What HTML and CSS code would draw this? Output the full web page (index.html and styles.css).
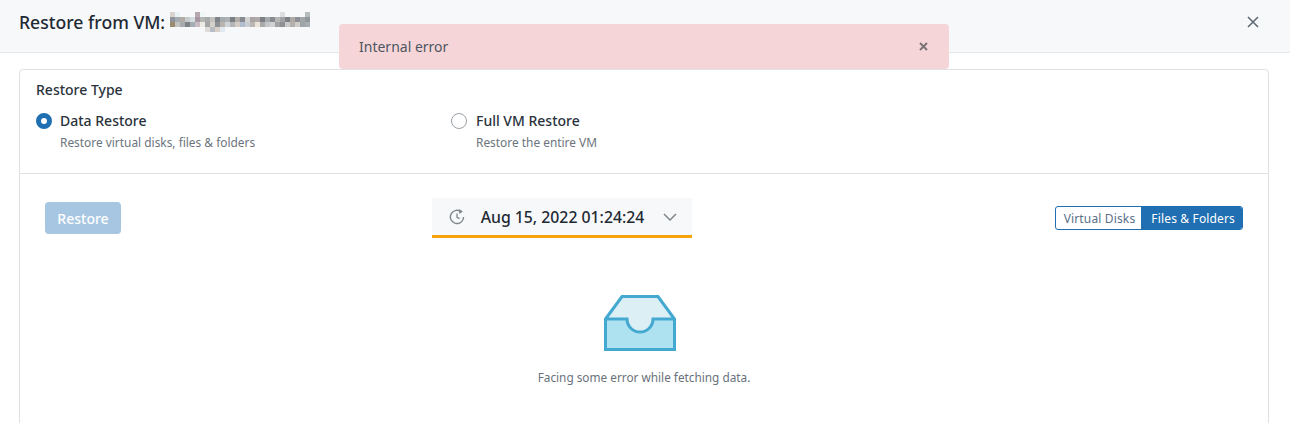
FILE: index.html
```html
<!DOCTYPE html>
<html lang="en">

<head>
    <meta charset="UTF-8">
    <meta name="viewport" content="width=device-width, initial-scale=1.0">
    <title>Restore from VM</title>
    <link rel="stylesheet" href="styles.css">
</head>

<body>
    <header class="modal-header">
        <div class="modal-title">
            <h1>Restore from VM:</h1>
            <svg class="blurred-name" width="140" height="20" viewBox="0 0 140 20">
                <!-- top row -->
                <rect x="0" y="0" width="5" height="5" fill="#d8d4cf"/>
                <rect x="5" y="0" width="5" height="5" fill="#eaf2f5"/>
                <rect x="25" y="0" width="5" height="5" fill="#b7a8b0"/>
                <rect x="30" y="0" width="5" height="5" fill="#eef6f6"/>
                <rect x="110" y="0" width="5" height="5" fill="#dedede"/>
                <rect x="135" y="0" width="5" height="5" fill="#b4bcbc"/>
                <!-- second row -->
                <rect x="0" y="5" width="5" height="5" fill="#8f9498"/>
                <rect x="5" y="5" width="5" height="5" fill="#a4acb2"/>
                <rect x="10" y="5" width="5" height="5" fill="#b3aca6"/>
                <rect x="15" y="5" width="5" height="5" fill="#c6cbcd"/>
                <rect x="20" y="5" width="5" height="5" fill="#d5dde0"/>
                <rect x="25" y="5" width="5" height="5" fill="#a897a2"/>
                <rect x="30" y="5" width="5" height="5" fill="#b4b6b4"/>
                <rect x="35" y="5" width="5" height="5" fill="#a9abab"/>
                <rect x="40" y="5" width="5" height="5" fill="#c2c2c0"/>
                <rect x="45" y="5" width="5" height="5" fill="#7f8388"/>
                <rect x="50" y="5" width="5" height="5" fill="#a6abae"/>
                <rect x="55" y="5" width="5" height="5" fill="#aeb2b4"/>
                <rect x="60" y="5" width="5" height="5" fill="#7c7f84"/>
                <rect x="65" y="5" width="5" height="5" fill="#b2aeaa"/>
                <rect x="70" y="5" width="5" height="5" fill="#868b92"/>
                <rect x="75" y="5" width="5" height="5" fill="#d2d3d2"/>
                <rect x="80" y="5" width="5" height="5" fill="#aaa5a4"/>
                <rect x="85" y="5" width="5" height="5" fill="#b0aaa8"/>
                <rect x="90" y="5" width="5" height="5" fill="#7d8186"/>
                <rect x="95" y="5" width="5" height="5" fill="#a8a9aa"/>
                <rect x="100" y="5" width="5" height="5" fill="#888c92"/>
                <rect x="105" y="5" width="5" height="5" fill="#b5b6b6"/>
                <rect x="110" y="5" width="5" height="5" fill="#a0a2a4"/>
                <rect x="115" y="5" width="5" height="5" fill="#7e8184"/>
                <rect x="120" y="5" width="5" height="5" fill="#aeaaa8"/>
                <rect x="125" y="5" width="5" height="5" fill="#8c9094"/>
                <rect x="130" y="5" width="5" height="5" fill="#a2a6a8"/>
                <rect x="135" y="5" width="5" height="5" fill="#90989c"/>
                <!-- third row -->
                <rect x="0" y="10" width="5" height="5" fill="#9b8a6e"/>
                <rect x="5" y="10" width="5" height="5" fill="#c2c4c2"/>
                <rect x="10" y="10" width="5" height="5" fill="#a8abae"/>
                <rect x="15" y="10" width="5" height="5" fill="#7e8286"/>
                <rect x="20" y="10" width="5" height="5" fill="#a4adb4"/>
                <rect x="25" y="10" width="5" height="5" fill="#c6bcc2"/>
                <rect x="30" y="10" width="5" height="5" fill="#ecebe4"/>
                <rect x="35" y="10" width="5" height="5" fill="#a4a6a8"/>
                <rect x="40" y="10" width="5" height="5" fill="#d6d0ca"/>
                <rect x="45" y="10" width="5" height="5" fill="#8d9196"/>
                <rect x="50" y="10" width="5" height="5" fill="#b8b4ae"/>
                <rect x="55" y="10" width="5" height="5" fill="#cfd4d8"/>
                <rect x="60" y="10" width="5" height="5" fill="#b4b5b6"/>
                <rect x="65" y="10" width="5" height="5" fill="#d4ccc4"/>
                <rect x="70" y="10" width="5" height="5" fill="#b2bece"/>
                <rect x="75" y="10" width="5" height="5" fill="#c8ced2"/>
                <rect x="80" y="10" width="5" height="5" fill="#bcb6b2"/>
                <rect x="85" y="10" width="5" height="5" fill="#ebe4d8"/>
                <rect x="90" y="10" width="5" height="5" fill="#a8aaac"/>
                <rect x="95" y="10" width="5" height="5" fill="#c4c8ca"/>
                <rect x="100" y="10" width="5" height="5" fill="#d0d2d0"/>
                <rect x="105" y="10" width="5" height="5" fill="#a0a2a4"/>
                <rect x="110" y="10" width="5" height="5" fill="#8e9094"/>
                <rect x="115" y="10" width="5" height="5" fill="#c8cacb"/>
                <rect x="120" y="10" width="5" height="5" fill="#b4b0ae"/>
                <rect x="125" y="10" width="5" height="5" fill="#d0ccc8"/>
                <rect x="130" y="10" width="5" height="5" fill="#9ea4a8"/>
                <rect x="135" y="10" width="5" height="5" fill="#a6aeb2"/>
                <!-- bottom row -->
                <rect x="35" y="15" width="5" height="5" fill="#e0dcd8"/>
                <rect x="40" y="15" width="5" height="5" fill="#b8bcc4"/>
                <rect x="45" y="15" width="5" height="5" fill="#d8d0c8"/>
                <rect x="50" y="15" width="5" height="5" fill="#dfeaf2"/>
            </svg>
        </div>
        <button class="close-btn" aria-label="Close">
            <svg width="12" height="12" viewBox="0 0 12 12"><path d="M1 1l10 10M11 1L1 11" stroke="#5c6670" stroke-width="1.5" fill="none"/></svg>
        </button>
    </header>

    <div class="toast">
        <span>Internal error</span>
        <svg width="9" height="9" viewBox="0 0 9 9"><path d="M1 1l7 7M8 1L1 8" stroke="#7d7476" stroke-width="2" fill="none"/></svg>
    </div>

    <main class="content">
        <div class="card">
            <section class="restore-type">
                <h2>Restore Type</h2>
                <div class="radio-row">
                    <div class="radio-option">
                        <span class="radio checked"></span>
                        <div>
                            <div class="radio-label">Data Restore</div>
                            <div class="radio-desc">Restore virtual disks, files &amp; folders</div>
                        </div>
                    </div>
                    <div class="radio-option">
                        <span class="radio"></span>
                        <div>
                            <div class="radio-label">Full VM Restore</div>
                            <div class="radio-desc">Restore the entire VM</div>
                        </div>
                    </div>
                </div>
            </section>

            <section class="restore-body">
                <div class="toolbar">
                    <button class="restore-btn" disabled>Restore</button>
                    <div class="date-select">
                        <svg width="16" height="17" viewBox="0 0 16 17">
                            <path d="M12.6 4.2A6.6 6.6 0 1 0 14.6 9" stroke="#7f868c" stroke-width="1.4" fill="none"/>
                            <path d="M10.2 1l3.6 2.6-3.600 2.400z" fill="#7f868c"/>
                            <path d="M8 5.500V9.400l2.600 1.300" stroke="#7f868c" stroke-width="1.300" fill="none"/>
                        </svg>
                        <span class="date-text">Aug 15, 2022 01:24:24</span>
                        <svg width="14" height="8" viewBox="0 0 14 8"><path d="M1 1l6 6 6-6" stroke="#7f868c" stroke-width="1.500" fill="none"/></svg>
                    </div>
                    <div class="view-toggle">
                        <span class="toggle-item">Virtual Disks</span>
                        <span class="toggle-item active">Files &amp; Folders</span>
                    </div>
                </div>

                <div class="empty-state">
                    <svg width="72" height="56" viewBox="0 0 72 56">
                        <path d="M1.500 24L18 1.500H54L70.500 24H49A13 13 0 0 1 23 24z" fill="#dbeff4"/>
                        <path d="M1.500 24H23A13 13 0 0 0 49 24H70.500V54.500H1.500z" fill="#aee2f0"/>
                        <path d="M1.500 24L18 1.500H54L70.500 24V54.500H1.500zM1.500 24H23A13 13 0 0 0 49 24H70.500" fill="none" stroke="#43a9d1" stroke-width="3"/>
                    </svg>
                    <p>Facing some error while fetching data.</p>
                </div>
            </section>
        </div>
    </main>
</body>

</html>
```

FILE: styles.css
```css
html,
body {
    height: 100%;
}

body {
    font-family: "Noto Sans", sans-serif;
    margin: 0;
    padding: 0;
    background-color: #fff;
    color: #212b36;
    overflow: hidden;
    position: relative;
}

.modal-header {
    height: 52px;
    display: flex;
    align-items: center;
    justify-content: space-between;
    padding: 0 31px 0 19px;
    background-color: #f6f8fa;
    border-bottom: 1px solid #e6e8ea;
}

.modal-title {
    display: flex;
    align-items: center;
    gap: 5px;
    margin-bottom: 9px;
}

h1 {
    font-size: 17.6px;
    font-weight: 500;
    margin: 0;
    color: #1f2933;
}

.blurred-name {
    margin-top: 1px;
}

.close-btn {
    padding: 0;
    margin-bottom: 9px;
    border: none;
    background: none;
    display: flex;
}

.toast {
    position: absolute;
    left: 339px;
    top: 24px;
    width: 610px;
    height: 45px;
    box-sizing: border-box;
    padding: 0 21px 0 20px;
    display: flex;
    align-items: center;
    justify-content: space-between;
    background-color: #f6d5d8;
    border-radius: 4px;
    font-size: 14px;
    color: #4d5660;
}

.content {
    padding: 16px 21px 0 19px;
}

.card {
    border: 1px solid #dfe1e3;
    border-radius: 4px;
    height: 400px;
}

.restore-type {
    padding: 10px 16px 0;
    height: 93px;
    border-bottom: 1px solid #dfe1e3;
}

h2 {
    font-size: 14px;
    font-weight: 500;
    line-height: 19px;
    margin: 0 0 12px;
    color: #2a333c;
}

.radio-row {
    display: flex;
}

.radio-option {
    width: 415px;
    display: flex;
    gap: 8px;
}

.radio-option:last-child {
    gap: 9px;
}

.radio {
    width: 16px;
    height: 16px;
    box-sizing: border-box;
    border: 1px solid #9aa1a7;
    border-radius: 50%;
    margin-top: 2px;
}

.radio.checked {
    border: 5px solid #1f6fb2;
    background-color: #fff;
}

.radio-label {
    font-size: 14px;
    font-weight: 500;
    line-height: 20px;
    color: #2a333c;
}

.radio-desc {
    font-size: 11.9px;
    line-height: 17px;
    margin-top: 3px;
    color: #6b747d;
}

.restore-body {
    padding: 24px 25px 0 25px;
}

.toolbar {
    display: grid;
    grid-template-columns: 387px 260px 1fr;
    align-items: center;
}

.restore-btn {
    justify-self: start;
    width: 76px;
    height: 32px;
    padding: 0;
    font-family: inherit;
    font-size: 14px;
    font-weight: 500;
    color: #fff;
    background-color: #a6c6e2;
    border: none;
    border-radius: 4px;
}

.date-select {
    height: 40px;
    box-sizing: border-box;
    display: flex;
    align-items: center;
    justify-content: space-between;
    padding: 0 15px 0 17px;
    background-color: #f6f8fa;
    border-bottom: 3px solid #f7a30c;
}

.date-text {
    font-size: 15.8px;
    font-weight: 500;
    margin-right: 3px;
    color: #1f2933;
}

.view-toggle {
    justify-self: end;
    display: flex;
    height: 24px;
    box-sizing: border-box;
    border: 1px solid #1f6fb2;
    border-radius: 3px;
    overflow: hidden;
    font-size: 12px;
    letter-spacing: 0.15px;
}

.toggle-item {
    padding: 0 6px 0 8px;
    line-height: 23px;
    color: #5a7088;
}

.toggle-item.active {
    padding: 0 7px 0 10px;
    background-color: #1f6fb2;
    color: #fff;
}

.empty-state {
    margin-top: 57px;
    display: flex;
    flex-direction: column;
    align-items: center;
}

.empty-state svg {
    margin-right: 8px;
}

.empty-state p {
    margin: 18px 0 0;
    font-size: 11.8px;
    line-height: 16px;
    color: #69727b;
}
```
